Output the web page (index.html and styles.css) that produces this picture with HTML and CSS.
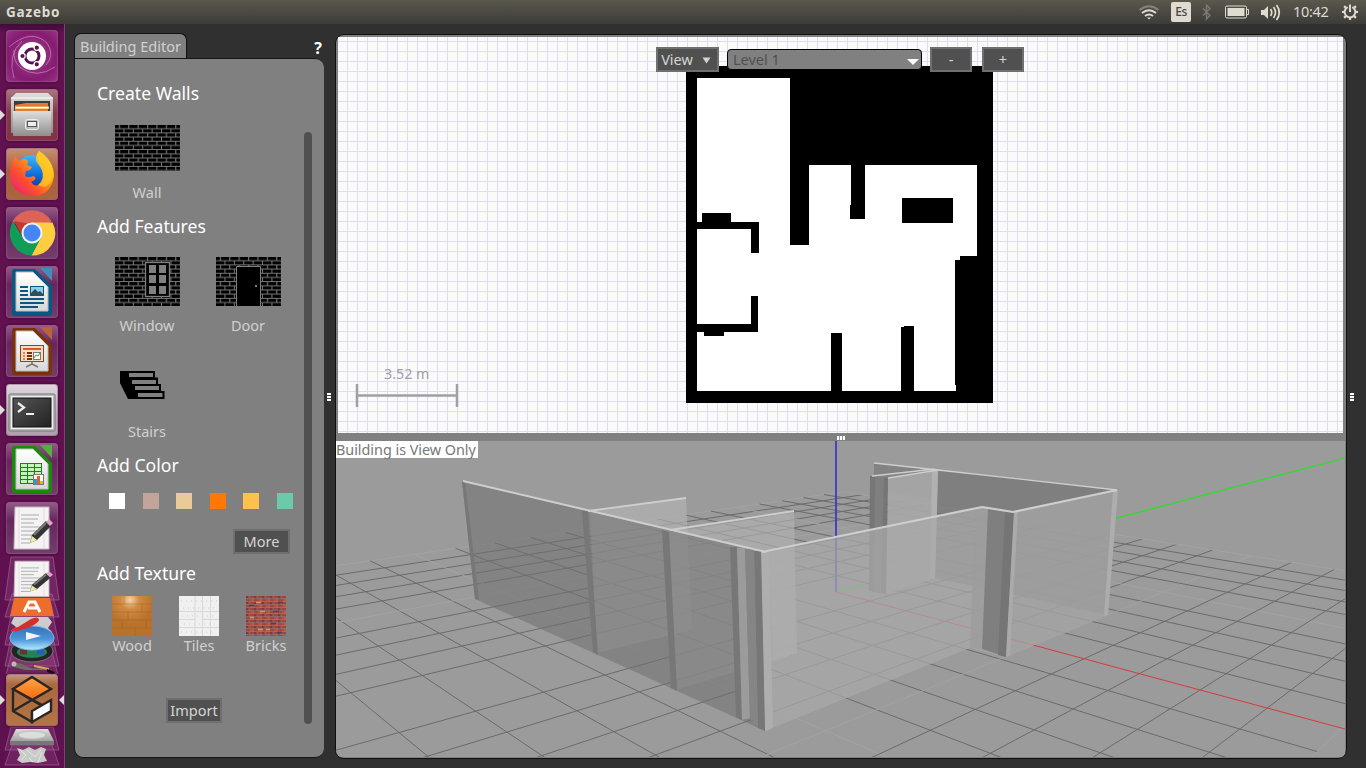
FILE: index.html
```html
<!DOCTYPE html>
<html lang="en">
<head>
<meta charset="utf-8">
<title>Gazebo</title>
<link rel="stylesheet" href="styles.css">
</head>
<body>
<svg class="defs" width="0" height="0">
  <defs>
    <linearGradient id="steel" x1="0" y1="0" x2="0" y2="1"><stop offset="0" stop-color="#dedede"/><stop offset="1" stop-color="#8e8e8e"/></linearGradient>
    <linearGradient id="paper" x1="0" y1="0" x2="0" y2="1"><stop offset="0" stop-color="#fff"/><stop offset="1" stop-color="#d8d8d8"/></linearGradient>
    <linearGradient id="fox" x1="1" y1="0" x2="0" y2="1"><stop offset="0" stop-color="#fff44f"/><stop offset=".35" stop-color="#ffa417"/><stop offset=".65" stop-color="#ff4f2e"/><stop offset="1" stop-color="#e31587"/></linearGradient>
    <linearGradient id="globe" x1="0" y1="0" x2="0" y2="1"><stop offset="0" stop-color="#3fb7f5"/><stop offset=".6" stop-color="#0a66d8"/><stop offset="1" stop-color="#33207e"/></linearGradient>
    <linearGradient id="screen" x1="0" y1="0" x2="1" y2="1"><stop offset="0" stop-color="#555"/><stop offset="1" stop-color="#222"/></linearGradient>
    <linearGradient id="orange" x1="0" y1="0" x2="0" y2="1"><stop offset="0" stop-color="#ffa544"/><stop offset="1" stop-color="#ee6b10"/></linearGradient>
    <linearGradient id="ball" x1="0" y1="0" x2="0" y2="1"><stop offset="0" stop-color="#3470b8"/><stop offset=".55" stop-color="#4d94d8"/><stop offset="1" stop-color="#b4ecff"/></linearGradient>
    <radialGradient id="shine" cx=".45" cy=".1" r=".6"><stop offset="0" stop-color="#f4d3a5"/><stop offset=".4" stop-color="#cf8942"/><stop offset="1" stop-color="#b8722b"/></radialGradient>
    <pattern id="brick" width="9.4" height="8.36" patternUnits="userSpaceOnUse">
      <rect width="9.4" height="8.36" fill="#000"/>
      <path d="M0 3.700H9.400M0 7.880H9.400M4.400 0V3.700M9 4V8" stroke="#808080" stroke-width="1.050"/>
    </pattern>
    <pattern id="redbrick" width="8" height="6" patternUnits="userSpaceOnUse">
      <rect width="8" height="6" fill="#a2453a"/><rect x="4" y="3" width="4" height="3" fill="#b84e36"/><rect width="3" height="3" fill="#87373a"/>
      <path d="M0 2.600H8M0 5.600H8M3 0V2.600M7 3V5.600" stroke="#92818f" stroke-width=".6"/>
    </pattern>
  </defs>
</svg>

<header class="topbar">
  <span class="app-name">Gazebo</span>
  <div class="indicators">
    <svg class="wifi" width="22" height="18" viewBox="1138 3 22 18"><g fill="none" stroke-width="2"><path d="M1139.500 10Q1149 2.500 1158.500 10" stroke="#85827a"/><path d="M1142 13Q1149 7.500 1156 13M1145 16Q1149 13 1153 16" stroke="#dfdbd2"/></g><path d="M1147 17.500h4l-2 2z" fill="#dfdbd2"/></svg>
    <span class="keyboard">Es</span>
    <svg class="bluetooth" width="12" height="18" viewBox="1201 3 12 18"><path d="M1203 8.500L1210 15.500L1206.500 19V5L1210 8.500L1203 15.500" fill="none" stroke="#7c7a73" stroke-width="1.400"/></svg>
    <svg class="battery" width="26" height="14" viewBox="1224 5 26 14"><rect x="1225.500" y="6" width="21" height="12" rx="1.500" fill="none" stroke="#dfdbd2"/><rect x="1227.500" y="8" width="17" height="8" fill="#dfdbd2"/><path d="M1247 9.500h1.500v5H1247" fill="none" stroke="#dfdbd2"/></svg>
    <svg class="volume" width="22" height="18" viewBox="1260 3 22 18"><path d="M1261 10h3l4-4v13l-4-4h-3z" fill="#dfdbd2"/><path d="M1270.500 9q2.500 3.500 0 7M1273.500 7q4 5.500 0 11M1276.500 5q5.500 7.500 0 15" fill="none" stroke="#dfdbd2" stroke-width="1.700"/></svg>
    <span class="clock">10:42</span>
    <svg class="power" width="18" height="18" viewBox="-9 -9 18 18"><g fill="none" stroke="#dfdbd2"><path d="M-2.300 -4.900A5.400 5.400 0 1 0 2.300 -4.900" stroke-width="2"/><path d="M0 -7.500V0" stroke-width="2"/><path d="M5.500 0H8M-5.500 0H-8M0 5.500V8M4 4L5.900 5.900M-4 4L-5.900 5.900M4.200 -4.200L5.900 -5.900M-4.200 -4.200L-5.900 -5.900" stroke-width="2.200"/></g></svg>
  </div>
</header>

<div class="desktop">
  <nav class="launcher">
    <div class="tile dash"><svg viewBox="0 0 52 52"><g fill="none" stroke="#d69bd0" stroke-opacity=".6"><path d="M3 17Q25 -2 41 13Q49 25 40 35M8 48Q1 25 16 11M49 37Q31 49 15 38Q7 32 8 20"/></g><circle cx="26" cy="26" r="14" fill="#fff"/><circle cx="26" cy="26" r="7" fill="none" stroke="#5a124f" stroke-width="3"/><g fill="#5a124f" stroke="#fff" stroke-width="1.200"><circle cx="16.500" cy="26" r="2.700"/><circle cx="30.800" cy="17.700" r="2.700"/><circle cx="30.800" cy="34.300" r="2.700"/></g></svg></div>
    <div class="tile files running"><svg viewBox="0 0 52 52"><path d="M5 9L10 4H42L47 9V44H5z" fill="url(#steel)"/><path d="M5 9H47" stroke="#fff"/><rect x="8" y="12" width="36" height="10" fill="#3c3c3c"/><path d="M9 16L20 14H42V22H9z" fill="#e07b35"/><path d="M9 20V17.500H43V20" fill="#f9c98f"/><path d="M10 18.500H42" stroke="#fff"/><path d="M7 22H45V47H7z" fill="url(#steel)"/><rect x="19.500" y="30.500" width="13" height="10" rx="2" fill="#bbb" stroke="#eee"/><rect x="21.500" y="32.500" width="9" height="5" fill="#eee" stroke="#555"/></svg></div>
    <div class="tile firefox running"><svg viewBox="0 0 52 52"><circle cx="26" cy="25" r="18" fill="url(#globe)"/><path d="M33 3Q48 13 48 28Q45 48 26 48Q5 46 4 27Q4 18 9 8L13 13Q19 9 22 13L21 17L26 19Q24 23 20 23L19 28Q22 30 28 28Q32 31 25 34Q30 41 36 34Q40 26 32 14Q29 8 33 3z" fill="url(#fox)"/><path d="M33 3Q48 13 47 29Q42 43 32 37Q39 31 36 22L30 13Q29 8 33 3z" fill="#ffca25" fill-opacity=".75"/></svg></div>
    <div class="tile"><svg viewBox="0 0 52 52"><path d="M26 26L6.500 14.500A22.500 22.500 0 0 1 45.500 14.500z" fill="#dd6357"/><path d="M26 26L25.500 48.500A22.500 22.500 0 0 1 7 14.500L17 31z" fill="#109d58"/><path d="M26 15.500H46.500A22.500 22.500 0 0 1 25.500 48.500L35 30z" fill="#ffcd40"/><path d="M8 14L17 30L25 17z" fill="#c53929"/><path d="M25.500 48.500L35.500 30L18 33z" fill="#109d58"/><circle cx="26" cy="26" r="10.500" fill="#f1f1f1"/><circle cx="26" cy="26" r="8.500" fill="#4486f4"/></svg></div>
    <div class="tile"><svg viewBox="0 0 52 52"><path d="M7 3H29L46 20V47Q46 50 43 50H9Q6 50 6 47V5z" fill="#075982"/><path d="M34 2H46V15z" fill="#418fb9"/><path d="M10 6H27L42 21V45H10z" fill="url(#paper)" stroke="#bbb"/><path d="M14 21H22M14 25H22M14 29H22M14 33H38M14 37H38M14 41H32" stroke="#075982" stroke-width="2"/><rect x="24.500" y="20.500" width="13" height="9" fill="#8bd0ee" stroke="#075982"/><path d="M25 29V27L29 23L32 26L34 25L37 28V29z" fill="#394c50"/></svg></div>
    <div class="tile"><svg viewBox="0 0 52 52"><path d="M7 3H29L46 20V47Q46 50 43 50H9Q6 50 6 47V5z" fill="#7c310b"/><path d="M34 2H46V15z" fill="#bd633c"/><path d="M10 6H27L42 21V46H10z" fill="url(#paper)" stroke="#bbb"/><rect x="14.500" y="20.500" width="23" height="16" fill="#fadccb" stroke="#a33e03"/><path d="M17 24H35" stroke="#dd5b1d" stroke-width="2"/><path d="M17 28H19M17 31H19M17 34H19" stroke="#e8834b" stroke-width="2"/><path d="M21 28H26M21 31H26M21 34H26" stroke="#7c310b" stroke-width="2"/><rect x="27.500" y="27.500" width="7" height="7" fill="#fff" stroke="#777"/><path d="M28 33L30 30L32 31L34 28" stroke="#37a437" fill="none"/><path d="M26 37V39L20 42M26 39L32 42" stroke="#777" stroke-width="1.500" fill="none"/></svg></div>
    <div class="tile terminal running"><svg viewBox="0 0 52 52"><rect x="3" y="10" width="46" height="37" rx="1" fill="#bbb" stroke="#777"/><rect x="5" y="12" width="42" height="33" fill="#eee"/><rect x="7" y="14" width="38" height="29" fill="url(#screen)" stroke="#111"/><path d="M12 19L18 23.500L12 28" fill="none" stroke="#eee" stroke-width="2.200"/><path d="M20 30H28" stroke="#eee" stroke-width="2"/></svg></div>
    <div class="tile"><svg viewBox="0 0 52 52"><path d="M7 3H29L46 20V47Q46 50 43 50H9Q6 50 6 47V5z" fill="#198a0a"/><path d="M34 2H46V15z" fill="#51b23b"/><path d="M10 6H27L42 21V46H10z" fill="url(#paper)" stroke="#bbb"/><rect x="14" y="20" width="22" height="21" fill="#168408"/><path d="M15 22.500H21M22 22.500H28M29 22.500H35M15 26.500H21M22 26.500H28M29 26.500H35M15 30.500H21M22 30.500H28M29 30.500H35M15 34.500H21M22 34.500H28M15 38.500H21M22 38.500H28" stroke="#c4f3bb" stroke-width="3"/><rect x="27.500" y="31.500" width="10" height="10" fill="#fff" stroke="#777"/><path d="M29.500 41V36" stroke="#209ddb" stroke-width="3"/><path d="M32.500 41V33" stroke="#dc6427" stroke-width="3"/><path d="M35.500 41V38" stroke="#edb700" stroke-width="3"/></svg></div>
    <div class="tile"><svg viewBox="0 0 52 52"><g id="note"><path d="M9 5H43V47H8z" fill="#f3f3f3" stroke="#bbb"/><path d="M13 5V47M38 5V47" stroke="#efc8c8" stroke-width=".7"/><path d="M15 13H33M15 17H32M15 21H28M15 25H35M15 29H32M15 33H28M15 37H32M15 41H24" stroke="#aaa"/><path d="M24 41L26 33L40 19L45 24L31 38z" fill="#343434"/><path d="M24 41L26 34L31 38z" fill="#f2e9a0"/><path d="M40 20L43 17L47 21L44 24z" fill="#e4a1ca"/><path d="M28 33L40 21" stroke="#777" stroke-width="2"/></g></svg></div>
    <svg class="folded" width="65" height="120" viewBox="0 554 65 120">
      <g fill="#a95694" fill-opacity=".28" stroke="#ac7ba4" stroke-opacity=".5"><path d="M11 557H53L59 600H5z"/><path d="M12 594H52L59 617H5z"/><path d="M11 615H53L59 645H5z"/><path d="M12 633H52L59 666H5z"/><path d="M12 652H52L59 679H5z"/></g>
      <g transform="translate(6 557) scale(1 .84)"><use href="#note"/></g>
      <path d="M14 598H50L54 616H10z" fill="#ed6d2c"/><path d="M24 612L29 602H35L40 612M28 608H37" fill="none" stroke="#fff" stroke-width="3"/>
      <path d="M14 617H48L52 622L48 628L52 632L42 635H18L11 631L16 627L11 623z" fill="#ccc"/>
      <ellipse cx="32" cy="651" rx="21" ry="11" fill="#242424" stroke="#777"/><ellipse cx="32" cy="652" rx="15" ry="6" fill="#268254"/><path d="M20 652H27" stroke="#6b3131" stroke-width="5"/><path d="M37 652H44" stroke="#295ac1" stroke-width="5"/><ellipse cx="32" cy="638" rx="22" ry="12" fill="url(#ball)" stroke="#75b7e7"/><path d="M26 632L41 636L26 640z" fill="#f4f4f4"/>
      <path d="M11 632Q11 628 18 627L31 619Q37 616 39 619Q40 622 30 627L18 631z" fill="#d62e2e"/>
      <path d="M12 662L22 664Q33 671 44 667L47 670H25L14 667z" fill="#6c6e61"/><path d="M34 666L49 669" stroke="#d7a05b" stroke-width="2"/><path d="M47 669L55 672L53 674L47 672z" fill="#111"/><circle cx="14" cy="664" r="2.500" fill="#bbb"/>
    </svg>
    <div class="tile gazebo running active"><svg viewBox="0 0 52 52"><path d="M26 3L45 15L26 26L7 15z" fill="url(#orange)"/><path d="M26 3L45 15L26 26L7 15zM7 15V37L26 48V38M7 37L26 26L45 37M26 26L45 15M7 15L36 31" fill="none" stroke="#2b2526" stroke-width="2.400"/><path d="M26 37L45 26V37L26 48z" fill="#fff" stroke="#2b2526" stroke-width="2.400"/></svg></div>
    <svg class="folded" width="65" height="42" viewBox="0 726 65 42"><g fill="#a95694" fill-opacity=".25" stroke="#ac7ba4" stroke-opacity=".5"><path d="M11 727H53L59 750H5z"/><path d="M12 745H52L59 765H5z"/></g><path d="M16 729H48L54 741V745H10V741z" fill="url(#steel)"/><path d="M10 741H54V745H10z" fill="#777"/><ellipse cx="32" cy="735" rx="14" ry="4" fill="#ddd" stroke="#bbb"/><path d="M17 748L23 750L29 747L35 750L41 747L46 749L44 755L47 761L38 763L30 762L22 763L17 760L20 755z" fill="#c8cbc7"/><path d="M19 749L26 755L21 760M27 750L35 757L41 750M42 752L38 762M29 758L33 762" fill="none" stroke="#e5e5e5"/></svg>
  </nav>

  <aside class="editor">
    <div class="tab">Building Editor</div><span class="help">?</span>
    <div class="panel">
      <h2>Create Walls</h2>
      <div class="features walls">
        <figure><svg width="65" height="46" viewBox="0 0 65 46"><rect width="65" height="46" fill="url(#brick)"/></svg><figcaption>Wall</figcaption></figure>
      </div>
      <h2>Add Features</h2>
      <div class="features openings">
        <figure><svg width="65" height="49" viewBox="0 0 65 49"><rect width="65" height="49" fill="url(#brick)"/><rect x="30.500" y="5.500" width="24" height="34" fill="#000" stroke="#808080" stroke-width="1.300"/><path fill="#808080" d="M34 8h7v8h-7zM44 8h7v8h-7zM34 18h7v8h-7zM44 18h7v8h-7zM34 29h7v8h-7zM44 29h7v8h-7z"/></svg><figcaption>Window</figcaption></figure>
        <figure><svg width="65" height="49" viewBox="0 0 65 49"><rect width="65" height="49" fill="url(#brick)"/><path d="M20.500 49V9.500H44.500V49" fill="#000" stroke="#808080"/><circle cx="40" cy="29" r="1.100" fill="#999"/></svg><figcaption>Door</figcaption></figure>
      </div>
      <div class="features stairs">
        <figure><svg width="65" height="28" viewBox="115 371 65 28"><path d="M120 371H155V377.500H158V384H161V391H164.500V399H128L120 383z" fill="#000"/><path d="M129 373h24v4h-24zM132 380h24v4h-24zM135 386h24v4h-24zM138 393h24.500v4h-24.500z" fill="#808080"/></svg><figcaption>Stairs</figcaption></figure>
      </div>
      <h2>Add Color</h2>
      <div class="swatches"><i class="white"></i><i class="rose"></i><i class="sand"></i><i class="tangerine"></i><i class="amber"></i><i class="mint"></i></div>
      <button class="more">More</button>
      <h2>Add Texture</h2>
      <div class="textures">
        <figure><svg width="40" height="40" viewBox="0 0 40 40"><rect width="40" height="40" fill="url(#shine)"/><path d="M0 8H40M0 16H40M0 24H40M0 32H40M12 0V8M30 8V16M16 16V24M34 24V32M10 24V32M23 32V40" stroke="#8e501a" stroke-width=".5" opacity=".6"/></svg><figcaption>Wood</figcaption></figure>
        <figure><svg width="40" height="40" viewBox="0 0 40 40"><rect width="40" height="40" fill="#f0f0f0"/><path d="M16 0V40M23.500 0V40M31.500 0V40M0 15.500H40M0 23.500H16M23 23.500H40M0 31.500H40" stroke="#d8d8d8"/><path d="M2 5H40M4 12H38M3 20H37M5 28H40M2 36H36" stroke="#ccc" stroke-dasharray="1 4"/></svg><figcaption>Tiles</figcaption></figure>
        <figure><svg width="40" height="40" viewBox="0 0 40 40"><rect width="40" height="40" fill="url(#redbrick)"/><path d="M10 6.500h5M14 15.500h5M4 21.500h4M20 33.500h4M12 33.500h5" stroke="#c69c5b" stroke-width="1.500"/><path d="M32 6.500h5M27 15.500h6M3 9.500h5M25 27.500h5M31 36.500h5" stroke="#46445c" stroke-width="1.500"/></svg><figcaption>Bricks</figcaption></figure>
      </div>
      <button class="import">Import</button>
      <div class="scrollbar"></div>
    </div>
  </aside>

  <div class="splitter"><i class="grip"></i></div>

  <main class="workspace">
    <section class="plan">
      <svg class="floor" width="1005" height="396" viewBox="338 37 1005 396">
        <rect x="686" y="66" width="307" height="337" fill="#000"/>
        <path fill="#fff" shape-rendering="crispEdges" d="M697 78H790V245H809V165H851V205H850V219H865V165H977V256H960V260H955V385H956V391H914V326H904V327H901V391H842V333H831V391H697z"/>
        <path shape-rendering="crispEdges" d="M697 222H702V213H731V222H759V253H751V229H697zM751 296H758V332H724V336H704V332H697V324H751zM902 198H953V223H902z"/>
        <path d="M357 384V407M457 384V407M357 395.500H457" fill="none" stroke="#a09fa4" stroke-width="2.500"/>
      </svg>
      <span class="scale">3.52 m</span>
      <div class="toolbar">
        <button class="view">View<svg width="9" height="7" viewBox="0 0 9 7"><path d="M.500 .500H8.500L4.500 6.500z" fill="#d2d2d2"/></svg></button>
        <div class="level"><span>Level 1</span><svg width="12" height="6" viewBox="0 0 12 6"><path d="M0 0H12L6 6z" fill="#fff"/></svg></div>
        <button class="step minus">-</button>
        <button class="step">+</button>
      </div>
    </section>
    <div class="divider"><i class="grip flat"></i></div>
    <section class="scene">
      <svg width="1009" height="316" viewBox="336 441 1009 316">
        <path d="M836 592L1345 458" stroke="#24e324" stroke-width="1.200"/>
        <g id="ground"></g>
        <path d="M836 592L1345 729" stroke="#d93a3a"/>
        <path d="M836 441V592" stroke="#3a3acb" stroke-width="1.800"/>
        <g id="walls">
          <path d="M590 511L686 498L692 630L597 653z" fill="#b4b4b4" fill-opacity=".65"/>
          <path d="M668 530L794 511L797 653L675 690z" fill="#b2b2b2" fill-opacity=".65"/>
          <path d="M874 463L938 470V500L874 490z" fill="#838383"/>
          <path d="M938 470L1117 490L1107 615L935 578z" fill="#747474" fill-opacity=".72"/>
          <path d="M888 478L938 470L935 578L886 594z" fill="#a7a7a7" fill-opacity=".92"/>
          <path d="M932 471H938L935 578L930 579z" fill="#b1b1b1"/>
          <path d="M870 476L888 478L886 594L869 591z" fill="#747474" fill-opacity=".95"/>
          <path d="M875 477H884L881 593L874 591z" fill="#7f7f7f"/>
          <path d="M1013 512L1118 490L1107 615L1006 657z" fill="#a3a3a3" fill-opacity=".82"/>
          <path d="M462 481L761 552L765 731L475 599z" fill="#707070" fill-opacity=".57"/>
          <path d="M761 552L982 507L1013 512L1006 657L970 648L765 731z" fill="#a9a9a9" fill-opacity=".74"/>
          <path d="M976 509L988 509L982 649L970 648z" fill="#9c9c9c" fill-opacity=".8"/>
          <path d="M988 509L1014 512L1006 657L982 649z" fill="#7f7f7f"/>
          <path d="M1005 511H1014L1006 657L998 655z" fill="#757575"/>
          <path d="M1014 512H1018L1010 655L1006 657z" fill="#aaa"/>
          <path d="M1113 491L1118 490L1108 615L1104 616z" fill="#adadad"/>
          <path d="M761 552H769L773 728L765 731z" fill="#aeaeae"/>
          <path d="M769 552L794 547L797 653L773 662z" fill="#b0b0b0" fill-opacity=".5"/>
          <path d="M462 481H465L479 600L475 599zM582 511H588L598 655L593 652zM662 530L669 532L677 691L671 688zM730 547H737L742 720L736 717zM754 551H761L765 731L758 728z" fill="#777"/>
          <path d="M737 548H745L750 718L742 720z" fill="#9b9b9b"/>
          <path d="M745 549H754L758 728L750 718z" fill="#858585"/>
          <g fill="none" stroke="#cecece" stroke-width="2"><path d="M463 481L766 552"/><path d="M588 511L686 498M670 530L794 511" stroke-width="1.800"/><path d="M762 552L982 507L1013 512L1117 490" stroke-width="2.200"/><path d="M938 470L1117 490M874 463L938 470M872 476L935 469M888 478L938 470" stroke-width="1.300"/></g>
        </g>
      </svg>
      <span class="notice">Building is View Only</span>
    </section>
  </main>
  <div class="splitter right"><i class="grip"></i></div>
</div>
<script src="ground.js"></script>
</body>
</html>
```
FILE: styles.css
```css
* { box-sizing: border-box; }
body { margin: 0; width: 1366px; height: 768px; overflow: hidden; background: #303030; font-family: "Noto Sans", "Open Sans", sans-serif; font-size: 14.5px; color: #d0d0d0; }
svg { display: block; flex: none; }
.defs { position: absolute; }
button { margin: 0; padding: 0 0 2px; background: #505050; border: 2px solid #6f6f6f; color: #d5d5d5; font: inherit; display: flex; align-items: center; justify-content: center; }
figure { margin: 0; display: flex; flex-direction: column; align-items: center; }

.topbar { height: 24px; display: flex; align-items: center; justify-content: space-between; padding: 0 7px 0 6px; background: linear-gradient(#5c594b, #55534a 15%, #3d3c37); color: #dfdbd2; }
.app-name { font-weight: 700; font-size: 13.5px; letter-spacing: .8px; }
.indicators { display: flex; align-items: center; }
.keyboard { width: 20px; height: 20px; margin: 0 10px 0 11px; border-radius: 2px; background: #dfdbd2; color: #45443f; font-size: 12px; line-height: 20px; text-align: center; letter-spacing: -.4px; font-weight: 500; }
.battery { margin-left: 11px; }
.volume { margin-left: 10px; }
.clock { width: 37px; margin: -2px 11px 0 11px; font-size: 14.5px; letter-spacing: -.3px; white-space: nowrap; }

.desktop { display: flex; height: 744px; }
.launcher { width: 65px; height: 744px; overflow: hidden; padding-top: 6px; background: linear-gradient(#3e0c37, #631150 8px, #5e114f); border-right: 1px solid #873b78; flex: none; }
.tile { position: relative; width: 52px; height: 52px; margin: 0 0 7px 6px; border-radius: 4px; background: linear-gradient(#955b88, #67265d 35%, #743d6c); box-shadow: inset 0 0 0 1px #965d8c88, 0 0 3px #35072e; }
.tile:nth-child(9) { margin-bottom: 0; }
.dash { background: radial-gradient(#9d498e, #861b70 65%, #98388a); }
.files { background: linear-gradient(#ac7880, #873846 45%, #843340); }
.firefox { background: linear-gradient(#c59278, #ac5d38 45%, #aa663f); }
.terminal { background: linear-gradient(#dfd8dd, #b8adb6 60%, #afa1ad); }
.gazebo { background: linear-gradient(#c59c82, #aa683d 20%, #b27545); margin-bottom: 0; }
.running::before { content: ""; position: absolute; left: -6px; top: 21px; border: 5px solid transparent; border-left-color: #ddd; border-right: 0; }
.active::after { content: ""; position: absolute; right: -6px; top: 21px; border: 5px solid transparent; border-right-color: #ddd; border-left: 0; }

.editor { width: 250px; height: 725px; margin: 9px 0 0 9px; display: flex; flex-wrap: wrap; justify-content: space-between; align-content: flex-start; flex: none; }
.tab { width: 113px; height: 26px; padding: 4px 0 0 5px; background: #808080; border: 1px solid #111; border-bottom: 0; border-radius: 7px 7px 0 0; line-height: 17px; white-space: nowrap; font-size: 14.5px; color: #d0d0d0; }
.help { margin: 4px 2px 0 0; color: #fff; font-weight: 700; font-size: 16px; line-height: 22px; }
.panel { position: relative; width: 250px; height: 700px; margin-top: -1px; padding: 21px 0 0 22px; background: #808080; border: 1px solid #151515; border-right: 0; border-radius: 0 9px 9px 9px; }
h2 { margin: 0; height: 26px; line-height: 26px; font-size: 17.6px; font-weight: 400; color: #fff; }
.features { display: flex; gap: 36px; margin-left: 18px; }
.features figure { width: 65px; }
.features figcaption { height: 22px; line-height: 22px; padding-right: 1px; }
.walls { margin: 19px 0 10px 18px; }
.walls figcaption { margin-top: 10px; }
.openings { margin-top: 18px; }
.openings figcaption { margin-top: 8px; }
.stairs { margin: 35px 0 10px 18px; }
.stairs figcaption { margin-top: 21px; }
.swatches { display: flex; justify-content: space-between; width: 184px; margin: 15px 0 20px 12px; }
.swatches i { width: 16px; height: 16px; }
.white { background: #fff; }
.rose { background: #c1a59b; }
.sand { background: #e9ca9b; }
.tangerine { background: #ff7803; }
.amber { background: #ffc14c; }
.mint { background: #6dcaa9; }
.more { width: 57px; height: 25px; margin: 0 0 6px 136px; }
.textures { display: flex; justify-content: space-between; width: 174px; margin: 10px 0 41px 15px; }
.textures figure { width: 40px; white-space: nowrap; }
.textures figcaption { height: 21px; line-height: 18px; }
.import { width: 56px; height: 25px; margin-left: 69px; }
.scrollbar { position: absolute; left: 229px; top: 73px; width: 8px; height: 592px; border-radius: 4px; background: #505050; }

.splitter { width: 11px; padding: 2px 2px 0 0; display: flex; align-items: center; justify-content: center; flex: none; }
.grip { width: 4px; height: 8px; background: repeating-linear-gradient(#fff 0 2px, #444 2px 3px); }
.grip.flat { width: 8px; height: 4px; margin-top: 2px; background: repeating-linear-gradient(90deg, #fff 0 2px, #999 2px 3px); }
.workspace { width: 1012px; height: 725px; margin-top: 10px; background: #808080; border: 1px solid #101010; border-radius: 9px; overflow: hidden; flex: none; }
.plan { position: relative; width: 1005px; height: 396px; margin: 2px 0 0 2px; background-color: #fafafa; background-image: linear-gradient(90deg, #dfddf5 1px, transparent 1px), linear-gradient(#dfddf5 1px, transparent 1px); background-size: 10px 10px; background-position: 9px 4px; }
.scale { position: absolute; left: 46px; top: 327px; line-height: 20px; color: #a09fa4; font-size: 14.3px; }
.toolbar { position: absolute; left: 318px; top: 10px; display: flex; align-items: center; }
.view { width: 63px; height: 25px; gap: 9px; padding-right: 3px; }
.view svg { margin-top: 4px; }
.level { display: flex; align-items: center; justify-content: space-between; width: 195px; height: 21px; margin: 0 8px; padding: 0 2px 0 5px; background: #808080; border: 1px solid #000; border-radius: 4px; color: #505050; line-height: 19px; }
.level svg { margin-top: 4px; }
.step { width: 42px; height: 25px; }
.minus { margin-right: 10px; }
.divider { height: 8px; display: flex; align-items: center; justify-content: center; }
.scene { position: relative; width: 1009px; height: 316px; background: #9b9b9b; }
.notice { position: absolute; left: 0; top: 0; width: 142px; height: 17px; background: #fff; color: #777; font-size: 14.4px; letter-spacing: -.03px; line-height: 17px; white-space: nowrap; }
```
FILE: ground.js
```js
// Ground plane: a 20 x 20 grid projected with the camera's plane transform.
const project = (x, y) => {
  const d = 1 - 0.0359 * x + 0.0382 * y;
  return [(836 + 2.39 * x + 65.65 * y) / d, (592 - 12.5 * x + 13.9 * y) / d];
};
const ground = document.getElementById("ground");
function line(a, b, major) {
  const path = document.createElementNS("http://www.w3.org/2000/svg", "path");
  path.setAttribute("d", "M" + project(...a) + "L" + project(...b));
  path.setAttribute("stroke", major ? "#a3a3a3" : "#6b6b6b");
  path.setAttribute("stroke-width", "1");
  ground.appendChild(path);
}
for (let i = -10; i <= 10; i++) {
  if (i === 0) continue;
  line([i, -10], [i, 10], i % 5 === 0);
  line([-10, i], [10, i], i % 5 === 0);
}
```
